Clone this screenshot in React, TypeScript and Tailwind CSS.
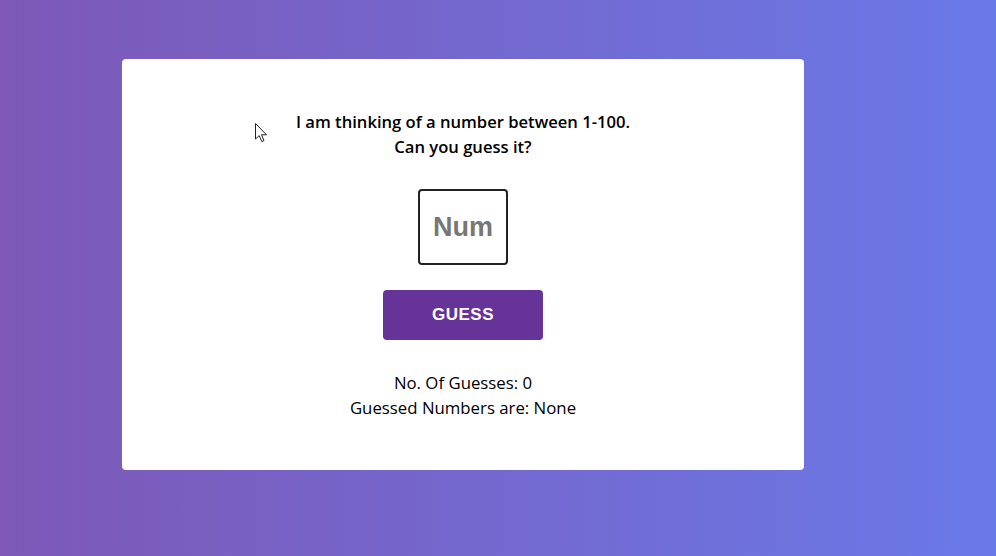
export default function App() {
  return (
    <div className="w-[996px] h-[556px] overflow-hidden bg-[linear-gradient(to_right,#7d58b6,#6a79e8)] relative">
      <div className="ml-[122px] mt-[59px] w-[682px] h-[411px] bg-white rounded-[4px] flex flex-col items-center pt-[50px] text-black" style={{ fontFamily: '"Open Sans", sans-serif' }}>
        <p className="text-[16.6px] leading-[25px] font-semibold text-center">
          I am thinking of a number between 1-100.
          <br />
          Can you guess it?
        </p>
        <div className="mt-[30px] w-[90px] h-[76px] border-2 border-[#222] rounded-[4px] flex items-center justify-center">
          <span className="text-[27px] font-bold text-[#777]" style={{ fontFamily: '"Liberation Sans", Arial, sans-serif' }}>Num</span>
        </div>
        <div className="mt-[25px] w-[160px] h-[50px] bg-[#663399] rounded-[4px] flex items-center justify-center">
          <span className="text-[17px] font-bold text-white tracking-[0.5px]" style={{ fontFamily: '"Liberation Sans", Arial, sans-serif' }}>GUESS</span>
        </div>
        <div className="mt-[30px] text-[16.8px] leading-[25px] text-center">
          <p>No. Of Guesses: 0</p>
          <p>Guessed Numbers are: None</p>
        </div>
      </div>
      <svg className="absolute left-[255px] top-[123px]" width="14" height="20" viewBox="0 0 14 20">
        <path d="M0.5 0.5 L0.5 16 L4.2 12.6 L6.8 18.6 L9 17.6 L6.5 11.8 L11.5 11.8 Z" fill="white" stroke="#222" strokeWidth="1" strokeLinejoin="round" />
      </svg>
    </div>
  );
}
